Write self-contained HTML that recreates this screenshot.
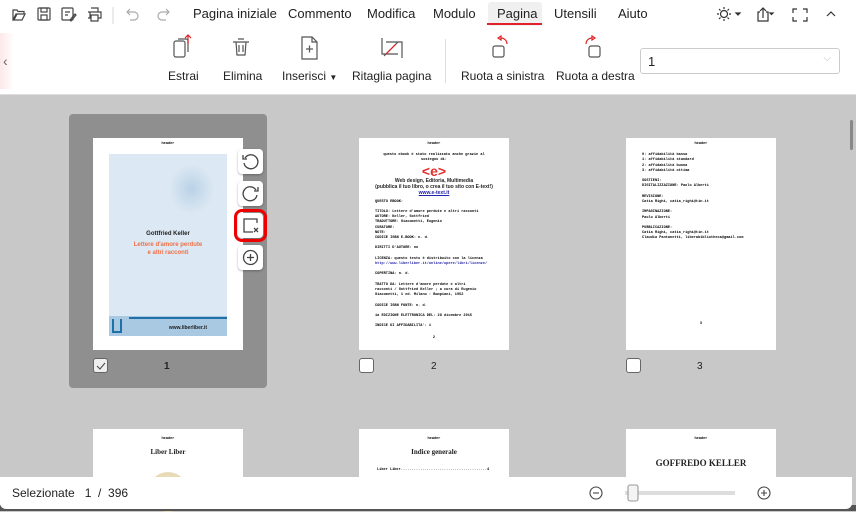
<!DOCTYPE html>
<html><head><meta charset="utf-8"><style>
*{margin:0;padding:0;box-sizing:border-box}
body{width:856px;height:511px;overflow:hidden;font-family:"Liberation Sans",sans-serif;background:#c8c8c8;position:relative;color:#222}
.abs{position:absolute}
.top{left:0;top:0;width:856px;height:95px;background:#fff;border-bottom:1px solid #ddd}
.menu span{position:absolute;top:6px;font-size:13px;color:#222}
.tb{position:absolute;top:69px;font-size:12px;color:#222;white-space:nowrap}
.pg{position:absolute;background:#fff;width:150px;height:212px}
.cb{position:absolute;width:15px;height:15px;border:1px solid #666;border-radius:3px;background:#fff}
.num{position:absolute;font-size:10px;font-weight:bold}
.tiny{font-size:3.6px;font-family:"Liberation Mono",monospace;color:#000;line-height:5.2px;font-weight:bold}
.side{position:absolute;left:238px;width:25px;height:25px;background:#fff;border-radius:4px;box-shadow:0 1px 2px rgba(0,0,0,.3)}
</style></head><body>
<div class="abs top">
 <svg class="abs" style="left:0;top:0" width="320" height="30" fill="none" stroke="#444" stroke-width="1.2">
  <path d="M13 10h4l1 1.5h6v2.5H17l-3 6h-1z M13 20l3-6h9l-3 6z"/>
  <rect x="38" y="8" width="12" height="12" rx="1"/><rect x="41" y="8" width="6" height="4"/><rect x="41" y="15" width="6" height="5"/>
  <rect x="62" y="8" width="11" height="12" rx="1"/><path d="M65 12h5M65 15h3M70 20l5-6 1 1-5 6z"/>
  <path d="M88 12h13v6h-3M88 18h2v-6M91 8h7v4M91 15h7v6h-7z"/>
  <path d="M113 7v17" stroke="#ddd"/>
  <path d="M130 9l-3 3 3 3M127 12h7a4 4 0 010 8h-4" stroke="#aaa"/>
  <path d="M166 9l3 3-3 3M169 12h-7a4 4 0 000 8h4" stroke="#aaa"/>
 </svg>
 <div class="menu">
  <span style="left:193px">Pagina iniziale</span><span style="left:288px">Commento</span><span style="left:367px">Modifica</span><span style="left:433px">Modulo</span>
  <span style="left:554px">Utensili</span><span style="left:618px">Aiuto</span>
 </div>
 <div class="abs" style="left:488px;top:2px;width:54px;height:24px;background:#f0f0f0;border-radius:3px"></div>
 <div class="abs" style="left:497px;top:6px;font-size:13px">Pagina</div>
 <div class="abs" style="left:487px;top:23px;width:55px;height:2px;background:#e0202a"></div>
 <svg class="abs" style="left:712px;top:4px" width="140" height="20" fill="none" stroke="#333" stroke-width="1.2">
  <circle cx="12" cy="10" r="3.5"/><path d="M12 3v2M12 15v2M5 10h2M17 10h2M7 5l1.5 1.5M15.5 13.5L17 15M7 15l1.5-1.5M15.5 6.5L17 5"/>
  <path d="M24 9l2 2 2-2z" fill="#333"/>
  <path d="M48 8h-2v9h10V8h-2M51 14V4M48 7l3-3 3 3"/><path d="M58 9l1.5 1.5L61 9z" fill="#333"/>
  <path d="M81 9V5h4M91 5h4v4M95 13v4h-4M85 17h-4v-4"/>
  <path d="M115 12l4-4 4 4"/>
 </svg>
 <div class="abs" style="left:0;top:33px;width:14px;height:56px;background:linear-gradient(90deg,#fde8e8,#fff)"></div>
 <div class="abs" style="left:3px;top:53px;font-size:14px;color:#666">‹</div>
 <svg class="abs" style="left:0;top:32px" width="640" height="34" fill="none" stroke="#555" stroke-width="1.2">
  <rect x="174" y="9" width="11" height="16" rx="2"/><path d="M178 7h8a2 2 0 012 2v11" /><path d="M188 12V3M185 6l3-3 3 3" stroke="#e02020"/>
  <path d="M233 10h16M236 10l1 13h8l1-13M239 13v7M243 13v7M238 7h6"/>
  <path d="M302 5h10l5 5v17h-15z M312 5v5h5 M306 17h7M309.5 13.5v7"/>
  <path d="M382 6v16h16M386 10h16v16M384 24l14-14" /><path d="M386 22l10-10" stroke="#e02020"/>
  <rect x="493" y="14" width="11" height="11" rx="2"/><path d="M501 6a6 6 0 016 6M498 6l3-2v4z" stroke="#e02020"/>
  <rect x="589" y="14" width="11" height="11" rx="2"/><path d="M592 6a6 6 0 00-6 6M595 6l-3-2v4z" stroke="#e02020"/>
 </svg>
 <div class="tb" style="left:168px">Estrai</div>
 <div class="tb" style="left:223px">Elimina</div>
 <div class="tb" style="left:282px">Inserisci <span style="font-size:8px">▼</span></div>
 <div class="tb" style="left:352px">Ritaglia pagina</div>
 <div class="abs" style="left:445px;top:39px;width:1px;height:44px;background:#ddd"></div>
 <div class="tb" style="left:461px">Ruota a sinistra</div>
 <div class="tb" style="left:556px">Ruota a destra</div>
 <div class="abs" style="left:640px;top:48px;width:200px;height:26px;border:1px solid #ccc;border-radius:3px;font-size:13px;padding:5px 7px">1<span style="position:absolute;right:8px;top:4px;color:#bbb;font-size:10px">⌵</span></div>
</div>
<div class="abs" style="left:850px;top:120px;width:3px;height:30px;background:#888;border-radius:2px"></div>
<div class="abs" style="left:69px;top:114px;width:198px;height:274px;background:#8f8f8f;border-radius:4px"></div>
<div class="pg" style="left:93px;top:138px">
 <div class="tiny" style="text-align:center;margin-top:4px;font-weight:bold">header</div>
 <div class="abs" style="left:16px;top:16px;width:118px;height:182px;background:#dce8f3">
  <div style="position:absolute;left:60px;top:10px;width:45px;height:50px;background:radial-gradient(#b9d2e6,#dce8f3 70%);"></div>
  <div style="position:absolute;top:77px;width:100%;text-align:center;font-size:6px;font-weight:bold;color:#222">Gottfried Keller</div>
  <div style="position:absolute;top:87px;width:100%;text-align:center;font-size:6px;font-weight:bold;color:#f07048;line-height:8px">Lettere d'amore perdute<br>e altri racconti</div>
  <div style="position:absolute;left:0;bottom:0;width:118px;height:20px;background:#a9c9e2"></div>
  <div style="position:absolute;left:20px;bottom:17px;width:98px;height:2px;background:#1f6fa8"></div>
  <div style="position:absolute;left:3px;bottom:3px;width:10px;height:14px;border:2px solid #1f6fa8;border-top:none"></div>
  <div style="position:absolute;right:20px;bottom:5px;font-size:5px;font-weight:bold">www.liberliber.it</div>
 </div>
</div>
<div class="side" style="top:149px"><svg width="25" height="25" fill="none" stroke="#444" stroke-width="1.3"><path d="M7 9a7 7 0 11-1 5M5 6v4h4"/></svg></div>
<div class="side" style="top:181px"><svg width="25" height="25" fill="none" stroke="#444" stroke-width="1.3"><path d="M18 9a7 7 0 10 1 5M20 6v4h-4"/></svg></div>
<div class="side" style="top:213px"><svg width="25" height="25" fill="none" stroke="#444" stroke-width="1.3"><path d="M19 10V6H6v13h9"/><path d="M16 15l4 4M20 15l-4 4"/></svg></div>
<div class="abs" style="left:234px;top:209px;width:33px;height:33px;border:3px solid #e00;border-radius:8px"></div>
<div class="side" style="top:245px"><svg width="25" height="25" fill="none" stroke="#444" stroke-width="1.3"><circle cx="12.5" cy="12.5" r="7"/><path d="M12.5 9v7M9 12.5h7"/></svg></div>
<div class="cb" style="left:93px;top:358px;background:#eee"><svg width="13" height="13" fill="none" stroke="#444" stroke-width="1"><path d="M3 7l3 3 5-6"/></svg></div>
<div class="num" style="left:164px;top:361px">1</div>
<div class="pg" style="left:359px;top:138px">
 <div class="tiny" style="text-align:center;margin-top:4px">header</div>
 <div class="tiny" style="text-align:center;margin-top:6px">questo ebook è stato realizzato anche grazie al<br>sostegno di:</div>
 <div style="text-align:center;color:#e03030;font-size:14px;font-weight:bold;line-height:14px">&lt;e&gt;</div>
 <div style="text-align:center;font-size:5px;line-height:6px;font-weight:bold">Web design, Editoria, Multimedia<br>(pubblica il tuo libro, o crea il tuo sito con E-text!)<br><span style="color:#22a;text-decoration:underline">www.e-text.it</span></div>
 <div class="tiny" style="padding:4px 16px 0">QUESTO EBOOK:<br><br>TITOLO: Lettere d'amore perdute e altri racconti<br>AUTORE: Keller, Gottfried<br>TRADUTTORE: Giacometti, Eugenio<br>CURATORE:<br>NOTE:<br>CODICE ISBN E-BOOK: n. d.<br><br>DIRITTI D'AUTORE: no<br><br>LICENZA: questo testo è distribuito con la licenza<br><span style="color:#22a">http://www.liberliber.it/online/opere/libri/licenze/</span><br><br>COPERTINA: n. d.<br><br>TRATTO DA: Lettere d'amore perdute e altri<br>racconti / Gottfried Keller ; a cura di Eugenio<br>Giacometti, 1 ed. Milano : Bompiani, 1952<br><br>CODICE ISBN FONTE: n. d.<br><br>1a EDIZIONE ELETTRONICA DEL: 28 dicembre 2015<br><br>INDICE DI AFFIDABILITA': 1</div>
 <div class="tiny" style="text-align:center;margin-top:6px">2</div>
</div>
<div class="cb" style="left:359px;top:358px"></div>
<div class="num" style="left:431px;top:361px;font-weight:normal">2</div>
<div class="pg" style="left:626px;top:138px">
 <div class="tiny" style="text-align:center;margin-top:4px">header</div>
 <div class="tiny" style="padding:6px 16px 0">0: affidabilità bassa<br>1: affidabilità standard<br>2: affidabilità buona<br>3: affidabilità ottima<br><br>SOSTIENI:<br>DIGITALIZZAZIONE: Paolo Alberti<br><br>REVISIONE:<br>Catia Righi, catia_righi@tin.it<br><br>IMPAGINAZIONE:<br>Paolo Alberti<br><br>PUBBLICAZIONE:<br>Catia Righi, catia_righi@tin.it<br>Claudia Pantanetti, liberabibliotheca@gmail.com</div>
 <div class="tiny" style="text-align:center;margin-top:80px">3</div>
</div>
<div class="cb" style="left:626px;top:358px"></div>
<div class="num" style="left:697px;top:361px;font-weight:normal">3</div>
<div class="pg" style="left:93px;top:429px;height:60px"><div class="tiny" style="text-align:center;margin-top:8px">header</div><div style="text-align:center;font-family:'Liberation Serif',serif;font-size:7px;font-weight:bold;margin-top:6px">Liber Liber</div><div style="position:absolute;left:55px;top:43px;width:40px;height:40px;border-radius:50%;background:#e8dcb8"></div></div>
<div class="pg" style="left:359px;top:429px;height:60px"><div class="tiny" style="text-align:center;margin-top:8px">header</div><div style="text-align:center;font-family:'Liberation Serif',serif;font-size:7px;font-weight:bold;margin-top:6px">Indice generale</div><div class="tiny" style="padding:12px 18px 0">Liber Liber........................................4</div></div>
<div class="pg" style="left:626px;top:429px;height:60px"><div class="tiny" style="text-align:center;margin-top:8px">header</div><div style="text-align:center;font-family:'Liberation Serif',serif;font-size:9px;font-weight:bold;margin-top:16px">GOFFREDO KELLER</div></div>
<div class="abs" style="left:0;top:505px;width:856px;height:6px;background:#555"></div>
<div class="abs" style="left:0;top:477px;width:852px;height:32px;background:#fff;border-radius:0 0 6px 6px"></div>
<div class="abs" style="left:12px;top:486px;font-size:12px">Selezionate&nbsp;&nbsp; 1&nbsp; /&nbsp; 396</div>
<svg class="abs" style="left:585px;top:482px" width="190" height="22" fill="none" stroke="#444" stroke-width="1.1"><circle cx="11" cy="11" r="6"/><path d="M8 11h6"/><path d="M40 11h110" stroke="#ddd" stroke-width="4"/><rect x="43" y="3" width="10" height="16" rx="2" fill="#f4f4f4" stroke="#999"/><circle cx="179" cy="11" r="6"/><path d="M176 11h6M179 8v6"/></svg>
</body></html>
